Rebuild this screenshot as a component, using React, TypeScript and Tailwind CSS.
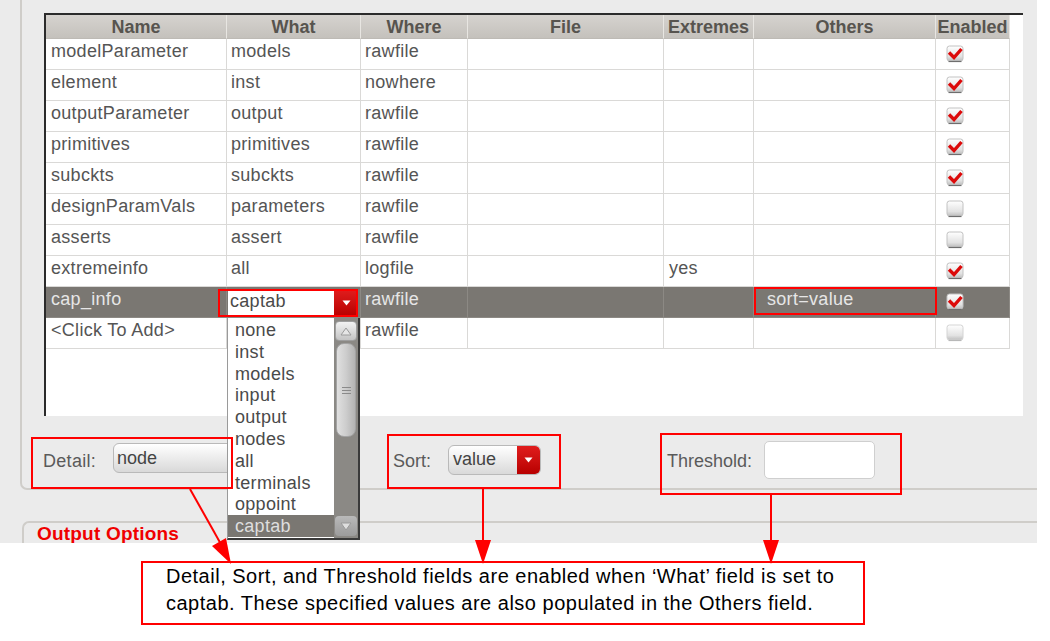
import React from "react";

type Row = {
  name: string;
  what: string;
  where: string;
  extremes?: string;
  others?: string;
  on: boolean;
  selected?: boolean;
  faded?: boolean;
};

const rows: Row[] = [
  { name: "modelParameter", what: "models", where: "rawfile", on: true },
  { name: "element", what: "inst", where: "nowhere", on: true },
  { name: "outputParameter", what: "output", where: "rawfile", on: true },
  { name: "primitives", what: "primitives", where: "rawfile", on: true },
  { name: "subckts", what: "subckts", where: "rawfile", on: true },
  { name: "designParamVals", what: "parameters", where: "rawfile", on: false },
  { name: "asserts", what: "assert", where: "rawfile", on: false },
  { name: "extremeinfo", what: "all", where: "logfile", extremes: "yes", on: true },
  { name: "cap_info", what: "captab", where: "rawfile", others: "sort=value", on: true, selected: true },
  { name: "<Click To Add>", what: "", where: "rawfile", on: false, faded: true },
];

const headers = ["Name", "What", "Where", "File", "Extremes", "Others", "Enabled"];

const listItems = ["none", "inst", "models", "input", "output", "nodes", "all", "terminals", "oppoint", "captab"];

function Checkbox({ on, faded }: { on: boolean; faded?: boolean }) {
  return (
    <svg width="18" height="18" viewBox="0 0 18 18" className="mt-[6px] ml-[10px]">
      <defs>
        <linearGradient id={on ? "cbOn" : "cbOff"} x1="0" y1="0" x2="0" y2="1">
          <stop offset="0" stopColor="#ffffff" />
          <stop offset="0.7" stopColor={faded ? "#ececec" : "#e2e2e2"} />
          <stop offset="1" stopColor={faded ? "#cfcfcf" : "#bdbdbd"} />
        </linearGradient>
      </defs>
      <rect x="1" y="1" width="16" height="15" rx="2.5" fill={`url(#${on ? "cbOn" : "cbOff"})`} stroke={faded ? "#d4d4d4" : "#c2c2c2"} />
      <line x1="2.5" y1="16.5" x2="15.5" y2="16.5" stroke={faded ? "#b8b8b8" : "#6e6e6e"} strokeWidth="1.2" />
      {on && (
        <path d="M3 7.5 L8 12.5 L15.5 4" fill="none" stroke="#dc0a0a" strokeWidth="3.4" strokeLinejoin="miter" />
      )}
    </svg>
  );
}

function Arrow({ up }: { up?: boolean }) {
  return (
    <svg width="12" height="9" viewBox="0 0 12 9">
      {up ? (
        <path d="M6 1 L11 8 L1 8 Z" fill="#e6e6e6" stroke="#9c9c9c" />
      ) : (
        <path d="M1 1 L11 1 L6 8 Z" fill="#dedede" stroke="#9a9a9a" />
      )}
    </svg>
  );
}

function RedButton({ w = 24 }: { w?: number }) {
  return (
    <div
      className="h-full flex items-center justify-center bg-gradient-to-b from-[#e01c1c] to-[#b80000] rounded-r-[4px]"
      style={{ width: w }}
    >
      <svg width="9" height="6" viewBox="0 0 9 6">
        <path d="M0.5 0.5 L8.5 0.5 L4.5 5.5 Z" fill="#ffffff" />
      </svg>
    </div>
  );
}

export default function App() {
  return (
    <div className="relative w-[1050px] h-[641px] bg-white overflow-hidden font-['Liberation_Sans',Arial,sans-serif]">
      {/* grey dialog area */}
      <div className="w-[1037px] h-[543px] bg-[#ebebeb] overflow-hidden">
        {/* group box holding the table */}
        <div className="ml-[20px] w-[1017px] h-[490px] border-l-2 border-b-2 border-[#cfcdc9] rounded-bl-[7px] pl-[22px] pt-[13px]">
          <div className="w-[979px] h-[403px] bg-white border-l-2 border-t-2 border-[#2b2b2b]">
            <div className="grid grid-cols-[181px_134px_107px_196px_90px_182px_74px] w-[964px]">
              {headers.map((h) => (
                <div
                  key={h}
                  className="h-[24px] border-r border-r-[#e8e6e2] border-b border-b-[#bdbab5] bg-gradient-to-b from-[#d6d3cf] to-[#c4c1bc] text-center text-[18px] font-bold leading-[24px] text-[#57544f] whitespace-nowrap overflow-hidden"
                >
                  {h}
                </div>
              ))}
              {rows.map((r) => {
                const cell = `h-[31px] border-r border-b whitespace-nowrap overflow-hidden text-[18px] tracking-[0.3px] leading-[20px] pt-[2px] ${
                  r.selected
                    ? "bg-[#7a7772] text-[#e6e6e6] border-[#8c8984]"
                    : "bg-white text-[#555555] border-[#dad9d7]"
                }`;
                return (
                  <React.Fragment key={r.name}>
                    <div className={`${cell} pl-[5px]`}>{r.name}</div>
                    <div className={`${cell} ${r.selected ? "!pt-0" : "pl-[4px]"}`}>
                      {r.selected ? (
                        <div className="flex mt-[3px] ml-[1px] h-[26px] w-[130px]">
                          <div className="w-[106px] h-full bg-white text-[#4a4a4a] text-[18px] leading-[22px] pl-[2px]">
                            captab
                          </div>
                          <RedButton w={24} />
                        </div>
                      ) : (
                        r.what
                      )}
                    </div>
                    <div className={`${cell} pl-[4px]`}>{r.where}</div>
                    <div className={cell}></div>
                    <div className={`${cell} pl-[5px]`}>{r.extremes}</div>
                    <div className={`${cell} pl-[13px]`}>{r.others}</div>
                    <div className={`${cell} !pt-0`}>
                      <Checkbox on={r.on} faded={r.faded} />
                    </div>
                  </React.Fragment>
                );
              })}
            </div>
          </div>

          {/* Detail / Sort / Threshold */}
          <div className="flex items-center h-[42px] mt-[24px] -ml-px text-[18px] text-[#5a5a5a]">
            <span className="w-[54px] tracking-[0.3px]">Detail:</span>
            <div className="ml-[16px] w-[124px] h-[30px] rounded-[6px] border border-[#b9b9b9] bg-gradient-to-b from-[#ffffff] to-[#d9d9d9] pl-[3px] leading-[28px] text-[#444] -mt-[6px]">
              node
            </div>
            <span className="ml-[156px] w-[40px]">Sort:</span>
            <div className="ml-[15px] w-[93px] h-[30px] flex rounded-[6px] border border-[#b9b9b9] bg-gradient-to-b from-[#ffffff] to-[#d9d9d9] -mt-[2px] overflow-hidden">
              <div className="flex-1 pl-[4px] leading-[26px] text-[#444]">value</div>
              <RedButton w={23} />
            </div>
            <span className="ml-[126px] w-[89px]">Threshold:</span>
            <div className="ml-[8px] w-[111px] h-[38px] rounded-[5px] border border-[#cfcfcf] bg-white -mt-[3px]"></div>
          </div>
        </div>

        {/* Output Options group */}
        <div className="ml-[22px] mt-[31px] h-[40px] border-t-2 border-l-2 border-[#cfcdc9] rounded-tl-[7px]">
          <span className="inline-block -mt-[13px] ml-[12px] px-[1px] bg-[#ebebeb] text-[19px] tracking-[0.2px] font-bold leading-[22px] text-[#f00000]">
            Output Options
          </span>
        </div>
      </div>

      {/* callout */}
      <div className="ml-[141px] mt-[18px] w-[724px] h-[64px] border-2 border-[#f00] pl-[23px] text-[20px] tracking-[0.5px] leading-[27px] text-black whitespace-nowrap">
        Detail, Sort, and Threshold fields are enabled when ‘What’ field is set to
        <br />
        captab. These specified values are also populated in the Others field.
      </div>

      {/* open drop-down list */}
      <div className="absolute left-[227px] top-[318px] w-[133px] h-[222px] flex bg-white border-l border-l-[#9a9a9a] border-r-2 border-b-2 border-r-[#3a3a3a] border-b-[#3a3a3a]">
        <div className="w-[106px] pt-[1px]">
          {listItems.map((it) => (
            <div
              key={it}
              className={`h-[21.8px] pl-[7px] text-[18px] leading-[22px] tracking-[0.3px] ${
                it === "captab" ? "bg-[#7a7772] text-[#dedede]" : "text-[#4a4a4a]"
              }`}
            >
              {it}
            </div>
          ))}
        </div>
        <div className="w-[24px] bg-[#8b8985] flex flex-col items-center">
          <div className="mt-[3px] w-[22px] h-[20px] rounded-[4px] border border-[#9e9e9e] bg-gradient-to-b from-[#f2f2f2] to-[#c4c4c4] flex items-center justify-center">
            <Arrow up />
          </div>
          <div className="mt-[2px] w-[20px] h-[94px] rounded-[8px] border border-[#a3a3a3] bg-gradient-to-r from-[#e0e0e0] via-[#cdcdcd] to-[#b3b3b3] flex flex-col items-center justify-center gap-[2px]">
            <div className="w-[9px] h-px bg-[#8a8a8a]" />
            <div className="w-[9px] h-px bg-[#8a8a8a]" />
            <div className="w-[9px] h-px bg-[#8a8a8a]" />
          </div>
          <div className="flex-1" />
          <div className="mb-[2px] w-[22px] h-[20px] rounded-[4px] bg-gradient-to-b from-[#b9b9b9] to-[#9c9c9c] flex items-center justify-center">
            <Arrow />
          </div>
        </div>
      </div>

      {/* annotation boxes */}
      <div className="absolute left-[218px] top-[289px] w-[140px] h-[28px] border-2 border-[#f00]" />
      <div className="absolute left-[754px] top-[287px] w-[183px] h-[28px] border-2 border-[#f00]" />
      <div className="absolute left-[31px] top-[437px] w-[202px] h-[52px] border-2 border-[#f00]" />
      <div className="absolute left-[387px] top-[434px] w-[174px] h-[55px] border-2 border-[#f00]" />
      <div className="absolute left-[660px] top-[433px] w-[242px] h-[62px] border-2 border-[#f00]" />

      {/* arrows */}
      <svg className="absolute left-0 top-0 pointer-events-none" width="1050" height="641">
        <g stroke="#f00" strokeWidth="2" fill="none">
          <line x1="190" y1="489" x2="222" y2="546" />
          <line x1="483" y1="489" x2="483" y2="545" />
          <line x1="771" y1="495" x2="771" y2="545" />
        </g>
        <g fill="#f00">
          <polygon points="231,564 212,546 226,538" />
          <polygon points="483,564 475,540 491,540" />
          <polygon points="771,564 763,540 779,540" />
        </g>
      </svg>
    </div>
  );
}
